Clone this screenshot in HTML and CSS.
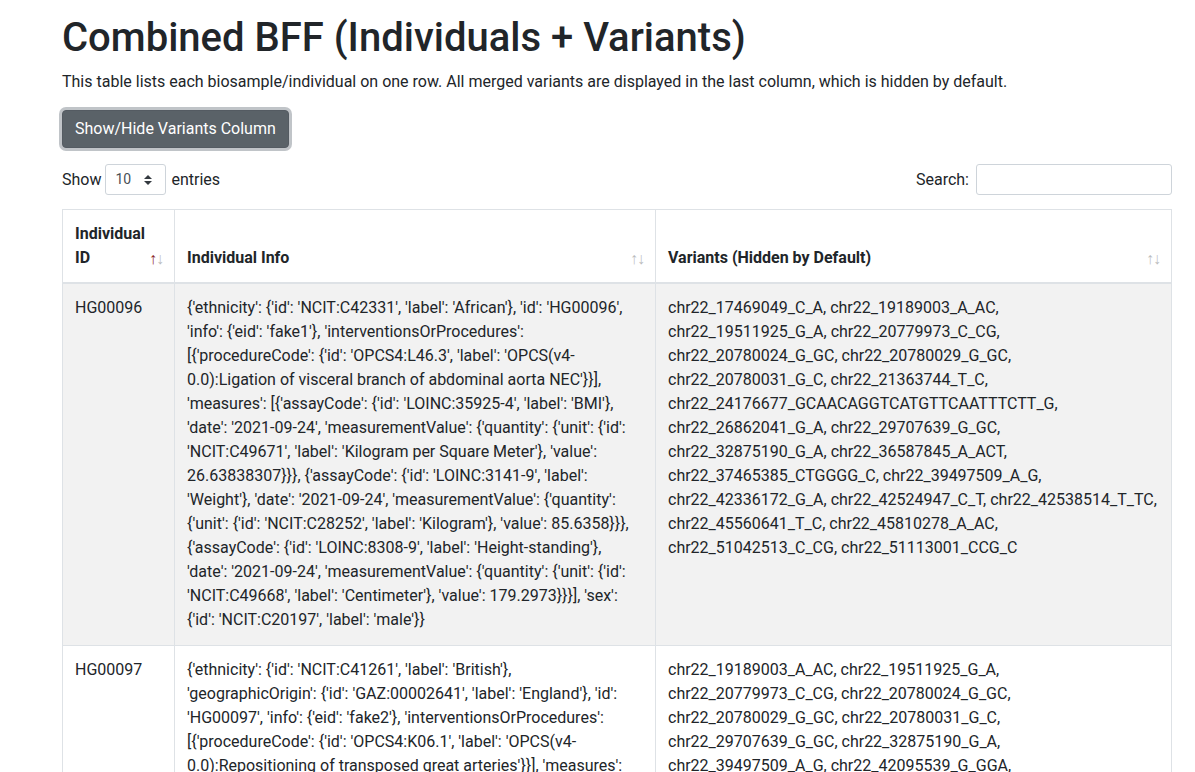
FILE: index.html
```html
<!DOCTYPE html>
<html lang="en">
<head>
<meta charset="utf-8">
<title>Combined BFF (Individuals + Variants)</title>
<link rel="stylesheet" href="styles.css">
</head>
<body>
<div class="page">
  <h1 class="title">Combined BFF (Individuals + Variants)</h1>
  <p class="lead-text">This table lists each biosample/individual on one row. All merged variants are displayed in the last column, which is hidden by default.</p>
  <div class="actions">
    <button class="btn" type="button">Show/Hide Variants Column</button>
  </div>
  <div class="dt-top">
    <label class="dt-length">Show
      <span class="select-wrap">
        <select class="select-sm">
          <option>10</option>
          <option>25</option>
          <option>50</option>
          <option>100</option>
        </select>
        <svg class="select-icon" width="10" height="12" viewBox="0 0 10 12"><path d="M1 5 L5 1 L9 5 Z M1 7 L5 11 L9 7 Z" fill="#343a40"/></svg>
      </span>
      entries</label>
    <label class="dt-filter">Search:<input class="search-input" type="search"></label>
  </div>
  <table class="data-table">
    <thead>
      <tr>
        <th class="col-id sort sort-asc">Individual ID</th>
        <th class="col-info sort">Individual Info</th>
        <th class="col-var sort">Variants (Hidden by Default)</th>
      </tr>
    </thead>
    <tbody>
      <tr class="odd">
        <td>HG00096</td>
        <td>{'ethnicity': {'id': 'NCIT:C42331', 'label': 'African'}, 'id': 'HG00096',<br>'info': {'eid': 'fake1'}, 'interventionsOrProcedures':<br>[{'procedureCode': {'id': 'OPCS4:L46.3', 'label': 'OPCS(v4-<br>0.0):Ligation of visceral branch of abdominal aorta NEC'}}],<br>'measures': [{'assayCode': {'id': 'LOINC:35925-4', 'label': 'BMI'},<br>'date': '2021-09-24', 'measurementValue': {'quantity': {'unit': {'id':<br>'NCIT:C49671', 'label': 'Kilogram per Square Meter'}, 'value':<br>26.63838307}}}, {'assayCode': {'id': 'LOINC:3141-9', 'label':<br>'Weight'}, 'date': '2021-09-24', 'measurementValue': {'quantity':<br>{'unit': {'id': 'NCIT:C28252', 'label': 'Kilogram'}, 'value': 85.6358}}},<br>{'assayCode': {'id': 'LOINC:8308-9', 'label': 'Height-standing'},<br>'date': '2021-09-24', 'measurementValue': {'quantity': {'unit': {'id':<br>'NCIT:C49668', 'label': 'Centimeter'}, 'value': 179.2973}}}], 'sex':<br>{'id': 'NCIT:C20197', 'label': 'male'}}</td>
        <td>chr22_17469049_C_A, chr22_19189003_A_AC,<br>chr22_19511925_G_A, chr22_20779973_C_CG,<br>chr22_20780024_G_GC, chr22_20780029_G_GC,<br>chr22_20780031_G_C, chr22_21363744_T_C,<br>chr22_24176677_GCAACAGGTCATGTTCAATTTCTT_G,<br>chr22_26862041_G_A, chr22_29707639_G_GC,<br>chr22_32875190_G_A, chr22_36587845_A_ACT,<br>chr22_37465385_CTGGGG_C, chr22_39497509_A_G,<br>chr22_42336172_G_A, chr22_42524947_C_T, chr22_42538514_T_TC,<br>chr22_45560641_T_C, chr22_45810278_A_AC,<br>chr22_51042513_C_CG, chr22_51113001_CCG_C</td>
      </tr>
      <tr class="even">
        <td>HG00097</td>
        <td>{'ethnicity': {'id': 'NCIT:C41261', 'label': 'British'},<br>'geographicOrigin': {'id': 'GAZ:00002641', 'label': 'England'}, 'id':<br>'HG00097', 'info': {'eid': 'fake2'}, 'interventionsOrProcedures':<br>[{'procedureCode': {'id': 'OPCS4:K06.1', 'label': 'OPCS(v4-<br>0.0):Repositioning of transposed great arteries'}}], 'measures':<br>[{'assayCode': {'id': 'LOINC:35925-4', 'label': 'BMI'}, 'date':<br>'2021-09-24', 'measurementValue': {'quantity': {'unit': {'id':<br>'NCIT:C49671', 'label': 'Kilogram per Square Meter'}, 'value':<br>22.1234}}}], 'sex': {'id': 'NCIT:C16576', 'label': 'female'}}</td>
        <td>chr22_19189003_A_AC, chr22_19511925_G_A,<br>chr22_20779973_C_CG, chr22_20780024_G_GC,<br>chr22_20780029_G_GC, chr22_20780031_G_C,<br>chr22_29707639_G_GC, chr22_32875190_G_A,<br>chr22_39497509_A_G, chr22_42095539_G_GGA,<br>chr22_45560641_T_C, chr22_51042513_C_CG</td>
      </tr>
    </tbody>
  </table>
</div>
</body>
</html>
```

FILE: styles.css
```css
* { box-sizing: border-box; }

html, body {
  margin: 0;
  padding: 0;
  background: #fff;
}

body {
  font-family: Roboto, "Liberation Sans", Arial, sans-serif;
  font-size: 16px;
  line-height: 1.5;
  color: #212529;
}

.page {
  padding: 14px 23px 0 62px;
}

.title {
  margin: 0 0 8px;
  font-size: 40px;
  font-weight: 500;
  line-height: 1.2;
}

.lead-text {
  margin: 0 0 16px;
}

.actions {
  margin-bottom: 16px;
}

.btn {
  display: inline-block;
  font-family: inherit;
  font-size: 16px;
  line-height: 1.5;
  padding: 6px 12px;
  color: #fff;
  background: #5a6268;
  border: 1px solid #545b62;
  border-radius: 4px;
  box-shadow: 0 0 0 3px rgba(130, 138, 145, 0.5);
  cursor: pointer;
}

.dt-top {
  display: flex;
  justify-content: space-between;
  align-items: flex-start;
}

.dt-length,
.dt-filter {
  display: inline-flex;
  align-items: center;
  margin-bottom: 8px;
  white-space: nowrap;
}

.select-wrap {
  position: relative;
  display: inline-block;
  margin: 0 5px 0 4px;
}

.select-sm {
  appearance: none;
  -webkit-appearance: none;
  width: 61px;
  height: 31px;
  padding: 4px 24px 4px 9px;
  font-family: inherit;
  font-size: 14px;
  line-height: 1.5;
  color: #495057;
  background: #fff;
  border: 1px solid #ced4da;
  border-radius: 3px;
}

.select-icon {
  position: absolute;
  right: 13px;
  top: 10px;
  pointer-events: none;
}

.search-input {
  width: 196px;
  height: 31px;
  margin-left: 7px;
  padding: 4px 8px;
  font-family: inherit;
  font-size: 14px;
  border: 1px solid #ced4da;
  border-radius: 3px;
  background: #fff;
}

.data-table {
  width: 1110px;
  table-layout: fixed;
  margin-top: 6px;
  border-collapse: collapse;
  border: 1px solid #dee2e6;
}

.data-table th,
.data-table td {
  border: 1px solid #dee2e6;
  padding: 12px;
  vertical-align: top;
  text-align: left;
}

.data-table th {
  font-weight: 700;
  vertical-align: bottom;
  border-bottom-width: 2px;
  position: relative;
  padding-right: 30px;
}

.col-id { width: 112px; }
.col-info { width: 481px; }
.col-var { width: auto; }

.data-table tbody tr.odd {
  background: #f2f2f2;
}

.data-table tbody tr.odd td {
  padding-bottom: 13px;
}

.sort::before,
.sort::after {
  position: absolute;
  bottom: 15px;
  font-size: 16px;
  line-height: 1;
  opacity: 0.3;
  font-weight: 400;
}

.sort::before {
  content: "\2191";
  right: 17px;
}

.sort::after {
  content: "\2193";
  right: 10px;
}

.sort-asc::before {
  opacity: 1;
  color: #8a2a2a;
}
```
